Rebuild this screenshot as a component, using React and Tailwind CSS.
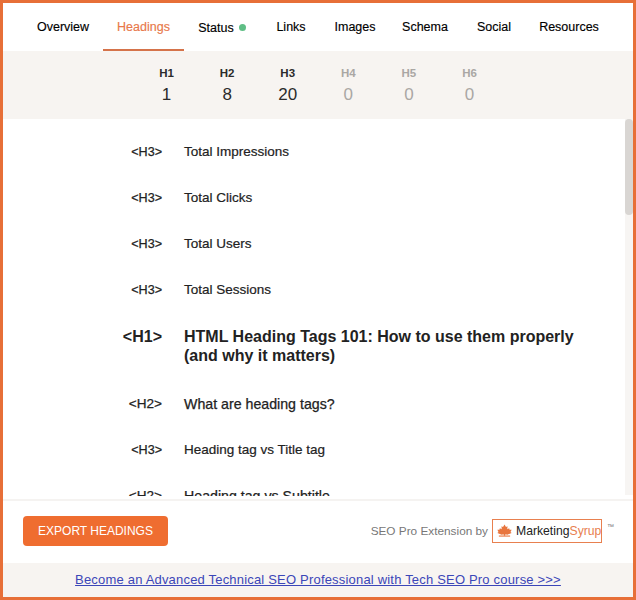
const tabs = [
  { name: "Overview", w: "w-[80px]" },
  { name: "Headings", w: "w-[81px]", active: true },
  { name: "Status", w: "w-[76px]", dot: true },
  { name: "Links", w: "w-[62px]" },
  { name: "Images", w: "w-[66px]" },
  { name: "Schema", w: "w-[74px]" },
  { name: "Social", w: "w-[64px]" },
  { name: "Resources", w: "w-[86px]" },
];

const counts = [
  { label: "H1", value: 1 },
  { label: "H2", value: 8 },
  { label: "H3", value: 20 },
  { label: "H4", value: 0 },
  { label: "H5", value: 0 },
  { label: "H6", value: 0 },
];

const headings = [
  { tag: "H3", text: "Total Impressions" },
  { tag: "H3", text: "Total Clicks" },
  { tag: "H3", text: "Total Users" },
  { tag: "H3", text: "Total Sessions" },
  { tag: "H1", text: "HTML Heading Tags 101: How to use them properly (and why it matters)" },
  { tag: "H2", text: "What are heading tags?" },
  { tag: "H3", text: "Heading tag vs Title tag" },
  { tag: "H2", text: "Heading tag vs Subtitle" },
];

function HeadingRow({ tag, text }) {
  let tagSize = "text-[12.6px] leading-[18px] [-webkit-text-stroke:0.25px_#222]";
  let textSize = "text-[13.5px] leading-[18px] [-webkit-text-stroke:0.2px_#222]";
  let gap = "mb-[28px]";
  if (tag === "H1") {
    tagSize = "text-[16px] leading-[19px] font-bold";
    textSize = "text-[16px] leading-[19px] font-bold";
    gap = "mt-[2px] mb-[30px]";
  }
  if (tag === "H2") {
    tagSize = "text-[13.6px] leading-[18px] [-webkit-text-stroke:0.25px_#222]";
    textSize = "text-[14.2px] leading-[18px] [-webkit-text-stroke:0.25px_#222]";
  }
  return (
    <div className={`flex items-start ${gap}`}>
      <div className={`w-[159px] shrink-0 text-right text-[#222] ${tagSize}`}>&lt;{tag}&gt;</div>
      <div className={`ml-[22px] w-[400px] text-[#222] ${textSize}`}>{text}</div>
    </div>
  );
}

export default function App() {
  return (
    <div className="w-[636px] h-[600px] border-[3px] border-[#e76f38] bg-white flex flex-col overflow-hidden font-['Liberation_Sans',Arial,sans-serif]">
      {/* tabs */}
      <div className="h-[48px] shrink-0 flex pl-[20px]">
        {tabs.map((t) => (
          <div
            key={t.name}
            className={`${t.w} h-full pt-[3px] flex items-center justify-center text-[12.5px] [-webkit-text-stroke:0.15px_currentColor] border-b-2 ${
              t.active ? "text-[#e8784a] border-[#d5734a]" : "text-black border-transparent"
            }`}
          >
            <span className={t.dot ? "mt-[2px]" : ""}>{t.name}</span>
            {t.dot && <span className="ml-[5px] w-[7px] h-[7px] rounded-full bg-[#5fbe85]"></span>}
          </div>
        ))}
      </div>

      {/* counts */}
      <div className="h-[68px] shrink-0 bg-[#f7f4f1] flex justify-center pt-[15px]">
        {counts.map((c) => (
          <div
            key={c.label}
            className={`w-[60.6px] text-center ${c.value === 0 ? "text-[#aaa7a4]" : "text-[#2b2b2b]"}`}
          >
            <div className="text-[11.5px] leading-[14px] font-bold">{c.label}</div>
            <div className="text-[17px] leading-[20px] mt-[5px]">{c.value}</div>
          </div>
        ))}
      </div>

      {/* list */}
      <div className="h-[377px] shrink-0 relative overflow-hidden pt-[24px]">
        {headings.map((h) => (
          <HeadingRow key={h.text} tag={h.tag} text={h.text} />
        ))}
        <div className="absolute right-0 top-0 bottom-[1px] w-[8px] bg-[#f7f5f3]">
          <div className="w-[8px] h-[96px] rounded bg-[#d9d6d3]"></div>
        </div>
      </div>

      {/* footer */}
      <div className="mt-[3px] h-[64px] shrink-0 border-t-2 border-[#f5f3f1] flex items-center justify-between pl-[20px] pr-[31px] pb-[2px]">
        <button className="w-[145px] h-[30px] rounded-[4px] bg-[#ef6d30] text-white text-[12px] flex items-center justify-center">
          EXPORT HEADINGS
        </button>
        <div className="flex items-center relative">
          <span className="text-[11.8px] text-[#777] mt-[2px]">SEO Pro Extension by</span>
          <div className="ml-[4px] h-[24px] w-[110px] border border-[#e8804f] flex items-center pl-[4px]">
            <svg width="15" height="14" viewBox="0 0 16 14" className="shrink-0">
              <path
                d="M8 0 L9.6 2.6 L11.2 2 L11 5 L13 4 L13.4 5.6 L15.6 5.6 L14.4 8 L15.6 9 L11 11 L9 10.4 L8.6 12 L7.4 12 L7 10.4 L5 11 L0.4 9 L1.6 8 L0.4 5.6 L2.6 5.6 L3 4 L5 5 L4.8 2 L6.4 2.6 Z"
                fill="#e8763f"
              />
              <path d="M2 12.4 L14 12.4" stroke="#e8763f" strokeWidth="1.2" />
            </svg>
            <span className="ml-[4px] text-[12.2px] leading-[14px] bg-white text-[#222] whitespace-nowrap">
              Marketing<span className="text-[#e8804f]">Syrup</span>
            </span>
          </div>
          <span className="absolute left-full top-[4px] ml-[5px] text-[7px] leading-[8px] text-[#777]">™</span>
        </div>
      </div>

      {/* promo */}
      <div className="flex-1 bg-[#f7f4f1] flex items-center justify-center">
        <a href="#" className="text-[13px] tracking-[0.19px] text-[#3b46b8] underline">
          Become an Advanced Technical SEO Professional with Tech SEO Pro course &gt;&gt;&gt;
        </a>
      </div>
    </div>
  );
}
